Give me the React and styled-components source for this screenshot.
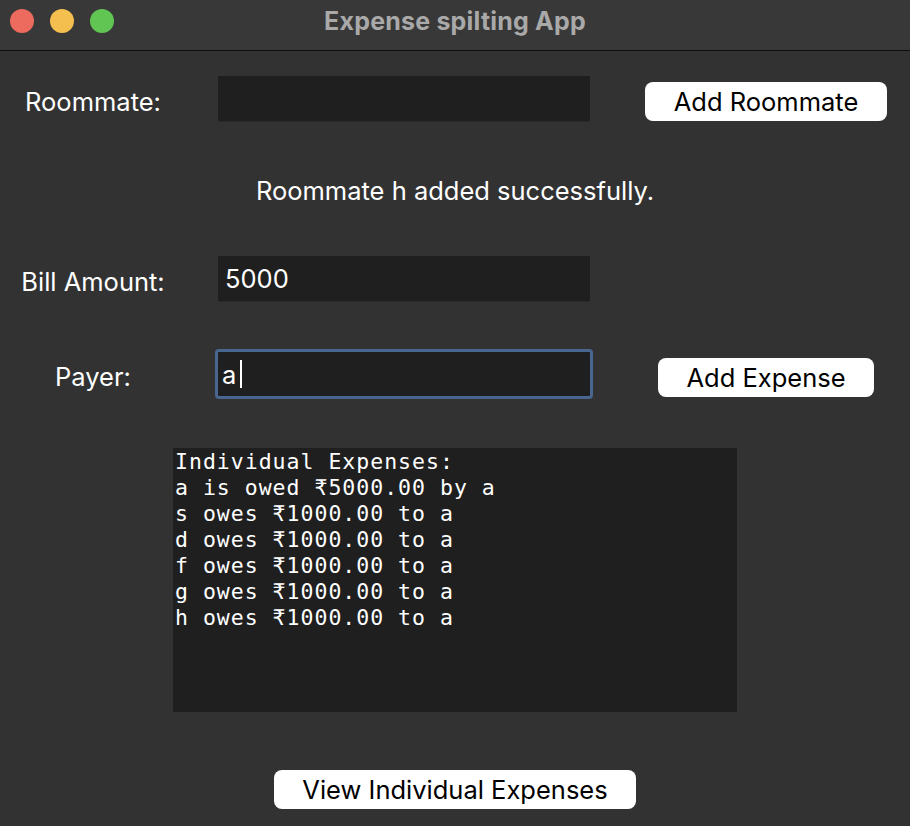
import React from "react";
import styled, { createGlobalStyle } from "styled-components";

const GlobalStyle = createGlobalStyle`
  html, body {
    margin: 0;
    padding: 0;
    background: #323232;
  }
  body {
    font-family: Inter, "Liberation Sans", sans-serif;
  }
`;

const Window = styled.div`
  width: 910px;
  height: 826px;
  background: #323232;
  display: flex;
  flex-direction: column;
  overflow: hidden;
`;

const TitleBar = styled.header`
  position: relative;
  box-sizing: border-box;
  height: 51px;
  padding-bottom: 9px;
  background: #383838;
  border-bottom: 1px solid #0f0f0f;
  display: flex;
  align-items: center;
  justify-content: center;
`;

const Lights = styled.div`
  position: absolute;
  left: 10px;
  top: 9px;
  display: flex;
  gap: 16px;
`;

const Light = styled.span`
  width: 24px;
  height: 24px;
  border-radius: 50%;
  background: ${(p) => p.$color};
`;

const Title = styled.h1`
  margin: 0;
  font-size: 25px;
  font-weight: 700;
  color: #a9a9a9;
  letter-spacing: 0.2px;
`;

const Body = styled.main`
  display: flex;
  flex-direction: column;
  padding-top: 25px;
`;

const FormRow = styled.div`
  display: grid;
  grid-template-columns: 186px 372px 1fr;
  column-gap: 32px;
  height: ${(p) => p.$height}px;
  margin-top: ${(p) => p.$top || 0}px;
  align-items: center;
`;

const Label = styled.label`
  text-align: center;
  color: #ffffff;
  font-size: 25.5px;
  padding-top: ${(p) => p.$shift || 0}px;
  white-space: nowrap;
`;

const Field = styled.input`
  box-sizing: border-box;
  width: ${(p) => (p.$focused ? "378px" : "372px")};
  height: ${(p) => (p.$focused ? "50px" : "45px")};
  margin-left: ${(p) => (p.$focused ? "-3px" : "0")};
  background: #1f1f1f;
  border: ${(p) => (p.$focused ? "3px solid #48668f" : "none")};
  border-radius: ${(p) => (p.$focused ? "4px" : "0")};
  color: #ffffff;
  font-family: Inter, "Liberation Sans", sans-serif;
  font-size: 25.5px;
  padding: 0 0 0 ${(p) => (p.$focused ? "4px" : "7px")};
  outline: none;
  box-shadow: ${(p) => (p.$focused ? "none" : "0 1px 0 #2a2a2a")};
`;

const FocusWrap = styled.div`
  position: relative;
`;

const Caret = styled.span`
  position: absolute;
  left: 22px;
  top: 11px;
  width: 2px;
  height: 28px;
  background: #ffffff;
`;

const ButtonCell = styled.div`
  display: flex;
  justify-content: center;
  align-self: ${(p) => p.$align || "center"};
  padding-top: ${(p) => p.$shift || 0}px;
`;

const Button = styled.button`
  background: #ffffff;
  color: #000000;
  border: none;
  border-radius: 8px;
  height: 39px;
  padding: 0 ${(p) => p.$pad || 29}px;
  font-family: Inter, "Liberation Sans", sans-serif;
  font-size: 25.5px;
  line-height: 39px;
  white-space: nowrap;
  cursor: pointer;
`;

const Message = styled.p`
  margin: 55px 0 0;
  height: 30px;
  line-height: 30px;
  text-align: center;
  color: #ffffff;
  font-size: 25.5px;
`;

const Output = styled.pre`
  box-sizing: border-box;
  align-self: center;
  width: 564px;
  height: 264px;
  margin: 49px 0 0;
  padding: 1px 2px;
  background: #1f1f1f;
  color: #ffffff;
  font-family: "DejaVu Sans Mono", "Liberation Mono", monospace;
  font-size: 21.5px;
  letter-spacing: 1px;
  line-height: 26px;
`;

const Footer = styled.div`
  display: flex;
  justify-content: center;
  margin-top: 58px;
`;

const expenses = [
  "Individual Expenses:",
  "a is owed ₹5000.00 by a",
  "s owes ₹1000.00 to a",
  "d owes ₹1000.00 to a",
  "f owes ₹1000.00 to a",
  "g owes ₹1000.00 to a",
  "h owes ₹1000.00 to a",
];

const App = () => {
  return (
    <Window>
      <GlobalStyle />
      <TitleBar>
        <Lights>
          <Light $color="#ed6a5e" />
          <Light $color="#f5bf4f" />
          <Light $color="#61c554" />
        </Lights>
        <Title>Expense spilting App</Title>
      </TitleBar>
      <Body>
        <FormRow $height={45}>
          <Label $shift={5}>Roommate:</Label>
          <Field readOnly value="" />
          <ButtonCell $align="end">
            <Button>Add Roommate</Button>
          </ButtonCell>
        </FormRow>

        <Message>Roommate h added successfully.</Message>

        <FormRow $height={44} $top={50}>
          <Label $shift={5}>Bill Amount:</Label>
          <Field readOnly value="5000" />
          <div />
        </FormRow>

        <FormRow $height={50} $top={49}>
          <Label $shift={5}>Payer:</Label>
          <FocusWrap>
            <Field $focused readOnly value="a" />
            <Caret />
          </FocusWrap>
          <ButtonCell $shift={7}>
            <Button $pad={28}>Add Expense</Button>
          </ButtonCell>
        </FormRow>

        <Output>{expenses.join("\n")}</Output>

        <Footer>
          <Button $pad={28}>View Individual Expenses</Button>
        </Footer>
      </Body>
    </Window>
  );
};

export default App;
